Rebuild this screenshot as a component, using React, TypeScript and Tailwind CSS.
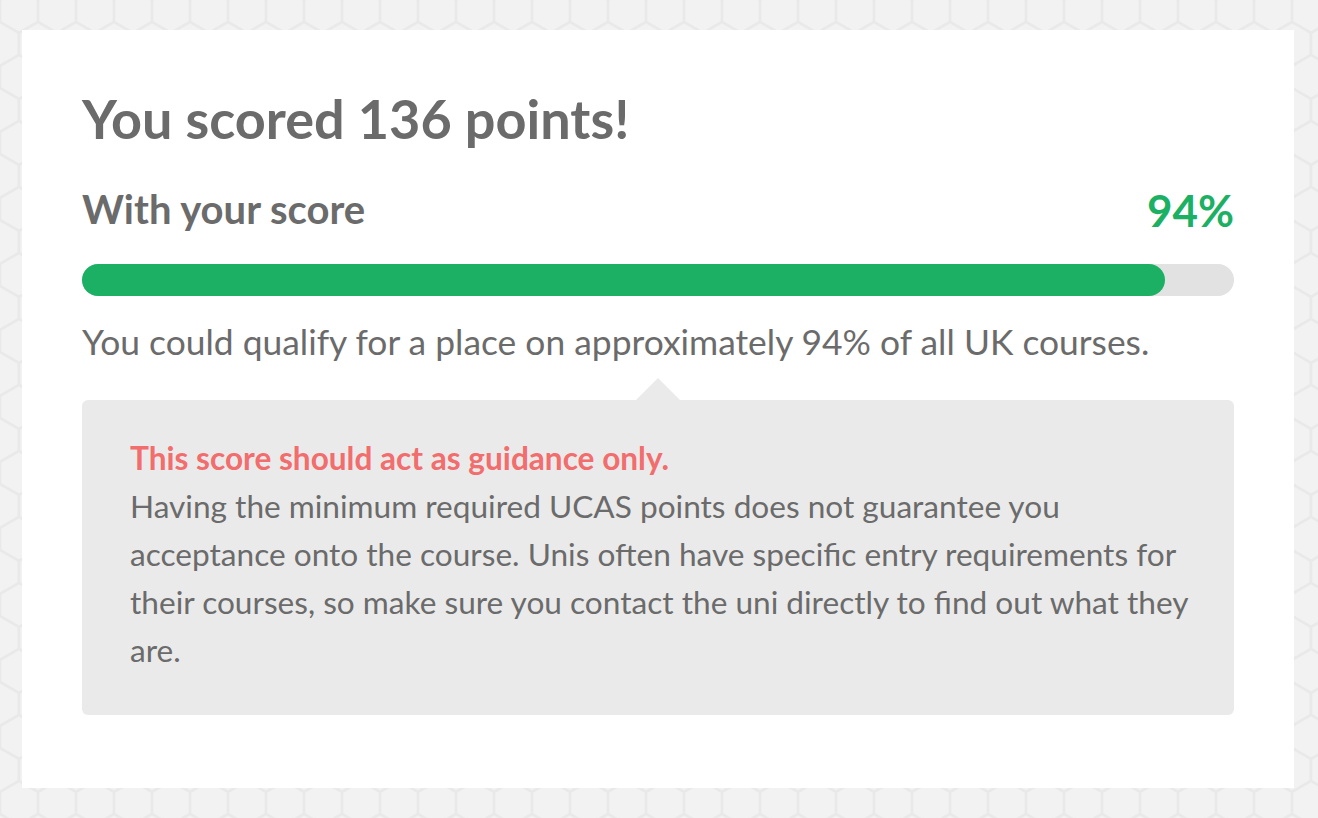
import React from "react";

function HexBg() {
  return (
    <svg className="absolute inset-0 h-full w-full" xmlns="http://www.w3.org/2000/svg">
      <defs>
        <pattern id="hex" width="38" height="66" patternUnits="userSpaceOnUse">
          <g fill="#f2f2f2" stroke="#e9e9e9" strokeWidth="2.5">
            <polygon points="19,-11 38,0 38,22 19,33 0,22 0,0" />
            <polygon points="0,22 19,33 19,55 0,66 -19,55 -19,33" />
            <polygon points="38,22 57,33 57,55 38,66 19,55 19,33" />
            <polygon points="19,55 38,66 38,88 19,99 0,88 0,66" />
          </g>
        </pattern>
      </defs>
      <rect width="100%" height="100%" fill="#efefef" />
      <rect width="100%" height="100%" fill="url(#hex)" />
    </svg>
  );
}

export default function App() {
  const pct = 94;
  return (
    <div
      className="relative h-[818px] w-[1318px] overflow-hidden"
      style={{ fontFamily: "Lato, 'Open Sans', sans-serif" }}
    >
      <HexBg />
      <div className="relative ml-[22px] mt-[30px] h-[758px] w-[1272px] bg-white px-[60px] pt-[62px] text-[#6b6b6b]">
        <h1 className="text-[54px] font-bold leading-none">You scored 136 points!</h1>
        <div className="mt-[39px] flex items-baseline justify-between">
          <h2 className="text-[40px] font-bold leading-none">With your score</h2>
          <span className="relative top-[3px] text-[44px] font-bold leading-none text-[#1cb064]">94%</span>
        </div>
        <div className="mt-[35px] h-[32px] w-full rounded-full bg-[#e2e2e2]">
          <div className="h-full rounded-full bg-[#1cb064]" style={{ width: `${pct}%` }} />
        </div>
        <p className="mt-[28px] text-[35.4px] leading-none">
          You could qualify for a place on approximately 94% of all UK courses.
        </p>
        <div className="relative mt-[41px] rounded-[6px] bg-[#eaeaea] pb-[41px] pl-[48px] pr-[20px] pt-[34px]">
          <div className="absolute left-[554px] top-[-22px] h-0 w-0 border-b-[22px] border-l-[22px] border-r-[22px] border-b-[#eaeaea] border-l-transparent border-r-transparent" />
          <p className="whitespace-nowrap text-[31.6px] font-bold leading-[48px] text-[#f26d6d]">
            This score should act as guidance only.
          </p>
          <p className="whitespace-nowrap text-[31.6px] leading-[48px]">
            Having the minimum required UCAS points does not guarantee you
            <br />
            acceptance onto the course. Unis often have specific entry requirements for
            <br />
            their courses, so make sure you contact the uni directly to find out what they
            <br />
            are.
          </p>
        </div>
      </div>
    </div>
  );
}
